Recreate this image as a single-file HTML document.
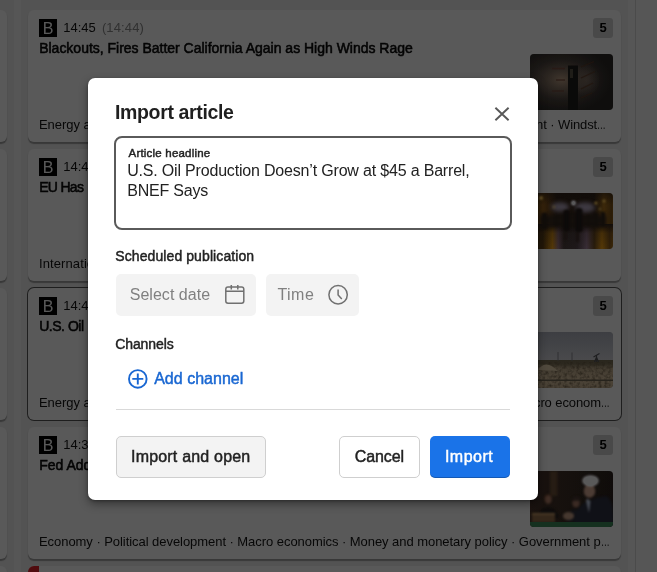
<!DOCTYPE html>
<html lang="en">
<head>
<meta charset="utf-8">
<title>Import article</title>
<style>
html,body{margin:0;padding:0}
body{width:657px;height:572px;overflow:hidden;position:relative;background:#ededed;font-family:"Liberation Sans",sans-serif;color:#222}
*{box-sizing:border-box}
.abs{position:absolute}
.strip{position:absolute;top:0;height:572px;background:#f6f6f6}
.card{will-change:transform;position:absolute;left:28px;width:593px;height:132px;background:#fff;border-radius:6px;box-shadow:0 1.5px 1px rgba(0,0,0,.32)}
.lcard{position:absolute;left:-20px;width:26.5px;height:132px;background:#fff;border-radius:6px;box-shadow:0 1.5px 1px rgba(0,0,0,.32)}
.card.sel{box-shadow:0 0 0 1px #585858}
.bico{position:absolute;left:11px;top:9px;width:18px;height:18px;background:#000;color:#fff;font-size:16px;line-height:20px;text-align:center;overflow:hidden}
.t{position:absolute;white-space:nowrap;line-height:1}
.m{-webkit-text-stroke:.45px currentColor}
.time{left:35.3px;top:11.2px;font-size:13px;color:#141414;letter-spacing:-.04px}
.time2{left:73.9px;top:11.2px;font-size:13px;color:#8c8c8c;letter-spacing:.13px}
.head{left:11.2px;top:31px;font-size:14px;color:#0c0c0c;letter-spacing:-.012px;-webkit-text-stroke:.55px currentColor}
.tags{left:11px;top:108px;font-size:13px;color:#141414;letter-spacing:-.053px}
.tagsr{top:108px;font-size:13px;color:#141414;letter-spacing:-.1px}
.badge{position:absolute;left:565px;top:8px;width:20px;height:20px;border-radius:3px;background:#d2d2d2;font-size:13px;font-weight:bold;line-height:20px;text-align:center;color:#000}
.thumb{position:absolute;left:502px;top:44px;width:83px;height:56px;border-radius:4px;overflow:hidden;background:#444;filter:brightness(2.857)}
.thumb svg{display:block}
.el{display:inline-block;transform:scaleX(.67);transform-origin:0 50%;margin-right:-4.3px;letter-spacing:0}
.overlay{position:absolute;left:0;top:0;width:657px;height:572px;background:rgba(0,0,0,.65)}
.modal{will-change:transform;position:absolute;left:88px;top:78px;width:450px;height:422px;background:#fff;border-radius:7px;box-shadow:0 4px 10px rgba(0,0,0,.4),0 1px 3px rgba(0,0,0,.3)}
.field{position:absolute;left:26px;top:58px;width:398px;height:94px;border:2px solid #5a5a5a;border-radius:8px}
.box{position:absolute;background:#f3f3f3;border-radius:5px}
.btn{position:absolute;top:358px;height:42px;border-radius:5px;border:1px solid #cfcfcf}
</style>
</head>
<body>
<!-- background page -->
<div class="lcard" style="top:10px"></div>
<div class="lcard" style="top:149px"></div>
<div class="lcard" style="top:288px"></div>
<div class="lcard" style="top:427px"></div>
<div class="lcard" style="top:566px"></div>
<div class="strip" style="left:14px;width:7px"></div>
<div class="strip" style="left:628px;width:29px"></div>
<div class="abs" style="left:635px;top:0;width:1px;height:572px;background:#d8d8d8"></div>

<div class="card" style="top:10px">
  <div class="bico">B</div>
  <span class="t time">14:45</span><span class="t time2">(14:44)</span>
  <span class="t head m">Blackouts, Fires Batter California Again as High Winds Rage</span>
  <span class="t tags">Energy and resource · Disaster and accident · Fire</span>
  <span class="t tagsr" style="right:15.2px">Environment · Windst<span class="el">…</span></span>
  <div class="badge">5</div>
  <div class="thumb" id="th1"><svg width="83" height="56" viewBox="0 0 83 56">
    <defs>
      <radialGradient id="g1" cx="38%" cy="46%" r="60%"><stop offset="0" stop-color="#40362d"/><stop offset=".28" stop-color="#2c2621"/><stop offset=".6" stop-color="#1a1715"/><stop offset="1" stop-color="#0f0e0d"/></radialGradient>
      <radialGradient id="g1b" cx="50%" cy="50%" r="50%"><stop offset="0" stop-color="#2c2622" stop-opacity=".9"/><stop offset="1" stop-color="#2c2622" stop-opacity="0"/></radialGradient>
      <filter id="bl1" x="-20%" y="-20%" width="140%" height="140%" color-interpolation-filters="sRGB"><feGaussianBlur stdDeviation=".7"/></filter>
    </defs>
    <rect width="83" height="56" fill="url(#g1)"/>
    <ellipse cx="56" cy="26" rx="14" ry="16" fill="url(#g1b)"/>
    <g filter="url(#bl1)"><rect x="38" y="11.500" width="10" height="46" fill="#0b0a09"/>
    <rect x="40" y="15" width="3" height="9" fill="#2a2521" opacity=".7"/>
    <path d="M22 14.500h13M26 26h9M22 37h12" stroke="#2a1a14" stroke-width="1.300" opacity=".8"/>
    <path d="M51 13l13-5.500M51 24l14-6.500M51 35l12-6M51 44l11-5" stroke="#22160f" stroke-width="1.300" opacity=".8"/></g>
  </svg></div>
</div>

<div class="card" style="top:149px">
  <div class="bico">B</div>
  <span class="t time">14:44</span>
  <span class="t head m"><span style="letter-spacing:-.7px;margin-right:3px">EU Has</span> Tools to Respond</span>
  <span class="t tags" style="letter-spacing:.1px">International relations · Trade</span>
  <div class="badge">5</div>
  <div class="thumb" id="th2"><svg width="83" height="56" viewBox="0 0 83 56">
    <defs>
      <linearGradient id="g2" x1="0" x2="1" y1="0" y2="0"><stop offset="0" stop-color="#3c2608"/><stop offset=".1" stop-color="#241808"/><stop offset=".2" stop-color="#35220a"/><stop offset=".34" stop-color="#140e0a"/><stop offset=".74" stop-color="#140e0a"/><stop offset=".84" stop-color="#3c280a"/><stop offset=".92" stop-color="#2a1c08"/><stop offset="1" stop-color="#442c08"/></linearGradient>
      <linearGradient id="g2b" x1="0" x2="1" y1="0" y2="0"><stop offset="0" stop-color="#3a2506"/><stop offset=".1" stop-color="#241808"/><stop offset=".2" stop-color="#241808"/><stop offset=".3" stop-color="#5a3c07"/><stop offset=".36" stop-color="#3a2c32"/><stop offset=".42" stop-color="#1c1716"/><stop offset=".56" stop-color="#1f1a1c"/><stop offset=".66" stop-color="#3c303a"/><stop offset=".74" stop-color="#2a1d0c"/><stop offset=".82" stop-color="#5c3d07"/><stop offset=".9" stop-color="#33220a"/><stop offset="1" stop-color="#573906"/></linearGradient>
      <linearGradient id="g2c" x1="0" x2="0" y1="0" y2="1"><stop offset="0" stop-color="#120d0a" stop-opacity="1"/><stop offset=".3" stop-color="#120d0a" stop-opacity=".3"/><stop offset="1" stop-color="#120d0a" stop-opacity="0"/></linearGradient>
      <linearGradient id="g2d" x1="0" x2="0" y1="0" y2="1"><stop offset="0" stop-color="#100b07" stop-opacity=".9"/><stop offset="1" stop-color="#100b07" stop-opacity="0"/></linearGradient>
      <filter id="bl2" x="-20%" y="-20%" width="140%" height="140%" color-interpolation-filters="sRGB"><feGaussianBlur stdDeviation=".9"/></filter>
      <filter id="bl2b" x="-20%" y="-20%" width="140%" height="140%" color-interpolation-filters="sRGB"><feGaussianBlur stdDeviation="2"/></filter>
      <filter id="bl2s" x="-10%" y="-10%" width="120%" height="120%" color-interpolation-filters="sRGB"><feGaussianBlur stdDeviation=".6"/></filter>
    </defs>
    <g filter="url(#bl2s)">
    <rect x="-6" y="-6" width="95" height="68" fill="url(#g2)"/>
    <rect x="-6" y="-6" width="95" height="18" fill="url(#g2d)"/>
    <rect x="-6" y="31" width="95" height="31" fill="url(#g2b)"/>
    <rect x="-6" y="31" width="95" height="31" fill="url(#g2c)"/>
    <g filter="url(#bl2b)">
      <ellipse cx="30" cy="14" rx="9" ry="4.500" fill="#423e48" opacity=".9"/><ellipse cx="55" cy="14.500" rx="10" ry="5" fill="#423e48" opacity=".9"/>
      <rect x="10" y="22" width="66" height="11" fill="#140f0c"/>
    </g>
    <g filter="url(#bl2)">
      <circle cx="43.500" cy="10" r="2.200" fill="#85858c"/>
      <rect x="33.500" y="17" width="6" height="21" rx="2" fill="#0d0a09"/><rect x="45.500" y="15" width="7" height="24" rx="2.500" fill="#0d0a09"/>
      <rect x="34" y="38" width="2.500" height="9" fill="#17110f"/><rect x="46" y="39" width="3" height="10" fill="#17110f"/>
      <rect x="64" y="20" width="4" height="13" fill="#120d0a"/><rect x="71" y="19" width="4" height="14" fill="#120d0a"/><rect x="12" y="20" width="5" height="16" fill="#120d0a"/><rect x="57" y="22" width="3" height="11" fill="#120d0a"/><rect x="25" y="23" width="3" height="10" fill="#120d0a"/>
      <circle cx="11" cy="5" r="1.700" fill="#7a6530"/><circle cx="66" cy="10" r="1.600" fill="#6a5628"/><circle cx="74" cy="8" r="1.500" fill="#6a5628"/><circle cx="24" cy="14" r="1.200" fill="#5a4a28"/><circle cx="70" cy="16" r="1.200" fill="#5a4a28"/>
    </g>
    </g>
  </svg></div>
</div>

<div class="card sel" style="top:288px">
  <div class="bico">B</div>
  <span class="t time">14:41</span>
  <span class="t head m"><span style="letter-spacing:-.47px;margin-right:3px">U.S. Oil</span> Production Doesn’t Grow at $45 a Barrel, BNEF Says</span>
  <span class="t tags">Energy and resource · Oil and gas</span>
  <span class="t tagsr" style="right:11.4px">Macro econom<span class="el">…</span></span>
  <div class="badge">5</div>
  <div class="thumb" id="th3"><svg width="83" height="56" viewBox="0 0 83 56">
    <defs>
      <linearGradient id="g3" x1="0" x2="0" y1="0" y2="1"><stop offset="0" stop-color="#3d3e42"/><stop offset=".6" stop-color="#444548"/><stop offset="1" stop-color="#4a4a4c"/></linearGradient>
      <linearGradient id="g3b" x1="0" x2="0" y1="0" y2="1"><stop offset="0" stop-color="#29261d"/><stop offset=".14" stop-color="#2c281f"/><stop offset=".3" stop-color="#423b30"/><stop offset=".7" stop-color="#4c4438"/><stop offset="1" stop-color="#473f33"/></linearGradient>
      <filter id="bl3" x="-20%" y="-20%" width="140%" height="140%" color-interpolation-filters="sRGB"><feGaussianBlur stdDeviation=".5"/></filter>
      <filter id="n3" x="0" y="0" width="100%" height="100%" color-interpolation-filters="sRGB"><feTurbulence type="fractalNoise" baseFrequency=".32" numOctaves="2" seed="4"/><feColorMatrix values="0 0 0 0 .13  0 0 0 0 .11  0 0 0 0 .08  0 0 0 -1.600 .95"/></filter>
    </defs>
    <rect width="83" height="28.500" fill="url(#g3)"/>
    <rect y="28" width="83" height="28" fill="url(#g3b)"/>
    <rect y="30" width="83" height="26" filter="url(#n3)"/>
    <g filter="url(#bl3)">
      <path d="M8 38q3-5 8-5.500t12 6.500z" fill="#50493d"/>
      <rect y="47.500" width="83" height="1.500" fill="#26231c"/>
      <path d="M28 20v9M42 20.500v8.500" stroke="#2b2b2d" stroke-width=".8"/>
      <path d="M63.500 25l6-3.500M66.500 23.500v6.500M64.500 30l2-5 2 5" stroke="#1e1e20" stroke-width="1.100" fill="none"/>
    </g>
  </svg></div>
</div>

<div class="card" style="top:427px">
  <div class="bico">B</div>
  <span class="t time">14:38</span>
  <span class="t head m">Fed Adds to Liquidity</span>
  <span class="t tags">Economy · Political development · Macro economics · Money and monetary policy · Government p<span class="el">…</span></span>
  <div class="badge">5</div>
  <div class="thumb" id="th4"><svg width="83" height="56" viewBox="0 0 83 56">
    <defs>
      <filter id="bl4" x="-20%" y="-20%" width="140%" height="140%" color-interpolation-filters="sRGB"><feGaussianBlur stdDeviation=".8"/></filter>
      <linearGradient id="g4" x1="0" x2="1" y1="0" y2="0"><stop offset="0" stop-color="#1a130f"/><stop offset=".5" stop-color="#15100d"/><stop offset="1" stop-color="#0f0c0b"/></linearGradient>
    </defs>
    <rect width="83" height="56" fill="url(#g4)"/>
    <g filter="url(#bl4)">
      <rect x="20" y="0" width="7.500" height="25" fill="#261c14"/>
      <ellipse cx="18.200" cy="27.500" rx="4.300" ry="4.800" fill="#241812"/>
      <ellipse cx="18.200" cy="28.500" rx="3.200" ry="4.300" fill="#3e2c24"/>
      <path d="M8 47q2-11 10-11t11 11z" fill="#0e0c0c"/>
      <ellipse cx="46" cy="32" rx="3.800" ry="4.600" fill="#3a2a23"/><path d="M42 30q0-4.500 4-4.500t4.500 4z" fill="#1a1412"/><path d="M37 51q1-13 9-13t8 13z" fill="#111115"/>
      <path d="M44 53q1-18 14-23l8-3 10-2q8 3 8 30z" fill="#101117"/>
      <ellipse cx="59.500" cy="20" rx="5.800" ry="6.800" fill="#4c3c34"/>
      <ellipse cx="60.500" cy="9.800" rx="8.200" ry="5.600" fill="#666667"/>
      <path d="M57 27.500l3.500 2.500-1.500 12-3-12z" fill="#454952"/>
      <ellipse cx="38.500" cy="45" rx="5.600" ry="4" fill="#46382f"/>
      <rect x="2" y="42.500" width="23" height="9" fill="#34271a"/><rect x="2" y="42" width="23" height="1.800" fill="#4a3a26"/>
    </g>
    <rect y="51" width="83" height="5" fill="#15301f"/>
  </svg></div>
</div>

<div class="card" style="top:566px;overflow:hidden"><div class="abs" style="left:0;top:0;width:11px;height:132px;background:#e5222a"></div></div>

<div class="overlay"></div>

<!-- modal -->
<div class="modal">
  <span id="title" class="t" style="left:27.03px;top:24.5px;font-size:19.5px;font-weight:bold;color:#1f1f1f;letter-spacing:-0.353px">Import article</span>
  <svg class="abs" style="left:404px;top:26px" width="20" height="20" viewBox="0 0 20 20"><path d="M3.400 3.700L16.600 16.300M16.600 3.700L3.400 16.300" stroke="#585858" stroke-width="1.900" fill="none"/></svg>
  <div class="field"></div>
  <span id="lbl" class="t m" style="left:40.55px;top:70px;font-size:11.5px;color:#222;letter-spacing:0.200px">Article headline</span>
  <span id="l1" class="t" style="left:39.15px;top:85px;font-size:16px;color:#222;letter-spacing:-0.182px">U.S. Oil Production Doesn’t Grow at $45 a Barrel,</span>
  <span id="l2" class="t" style="left:39.15px;top:105px;font-size:16px;color:#222;letter-spacing:-0.182px">BNEF Says</span>
  <span id="sched" class="t m" style="left:27.25px;top:171px;font-size:14px;color:#222;letter-spacing:0.094px">Scheduled publication</span>
  <div class="box" style="left:28px;top:196px;width:140px;height:42px"></div>
  <span id="seldate" class="t" style="left:41.75px;top:209px;font-size:16px;color:#808080;letter-spacing:0.022px">Select date</span>
  <svg class="abs" style="left:135px;top:205px" width="24" height="24" viewBox="0 0 24 24" fill="none" stroke="#707070" stroke-width="1.500"><rect x="2.800" y="4.100" width="18" height="16.100" rx="2.200"/><path d="M2.800 8.300H20.800M8.300 2V6.600M14.800 2V6.600"/></svg>
  <div class="box" style="left:178px;top:196px;width:93px;height:42px"></div>
  <span id="time" class="t" style="left:189.41px;top:209px;font-size:16px;color:#808080;letter-spacing:0.469px">Time</span>
  <svg class="abs" style="left:238px;top:205px" width="24" height="24" viewBox="0 0 24 24" fill="none" stroke="#707070" stroke-width="1.500"><circle cx="12.100" cy="11.800" r="9.200"/><path d="M12.100 6.500V12L15.800 16"/></svg>
  <span id="chan" class="t m" style="left:27.22px;top:259px;font-size:14px;color:#222;letter-spacing:-0.093px">Channels</span>
  <svg class="abs" style="left:38px;top:289px" width="24" height="24" viewBox="0 0 24 24" fill="none" stroke="#1967d2" stroke-width="1.900"><circle cx="11.800" cy="11.900" r="8.800"/><path d="M6.300 11.900H17.300M11.800 6.400V17.400"/></svg>
  <span id="addch" class="t m" style="left:66.18px;top:293px;font-size:16px;color:#1967d2;letter-spacing:0.018px">Add channel</span>
  <div class="abs" style="left:28px;top:331px;width:394px;height:1px;background:#d9d9d9"></div>
  <div class="btn" style="left:28px;width:150px;background:#f3f3f3"></div>
  <div class="btn" style="left:251px;width:81px;background:#fff"></div>
  <div class="btn" style="left:342px;width:80px;background:#1a73e8;border:none;box-shadow:inset 0 -1px 0 rgba(0,0,0,.22)"></div>
  <span id="b1" class="t m" style="left:43.00px;top:371px;font-size:16px;color:#222;letter-spacing:0.193px">Import and open</span>
  <span id="b2" class="t m" style="left:266.84px;top:371px;font-size:16px;color:#222;letter-spacing:-0.124px">Cancel</span>
  <span id="b3" class="t m" style="left:356.90px;top:371px;font-size:16px;color:#fff;letter-spacing:0.512px">Import</span>
</div>
</body>
</html>
